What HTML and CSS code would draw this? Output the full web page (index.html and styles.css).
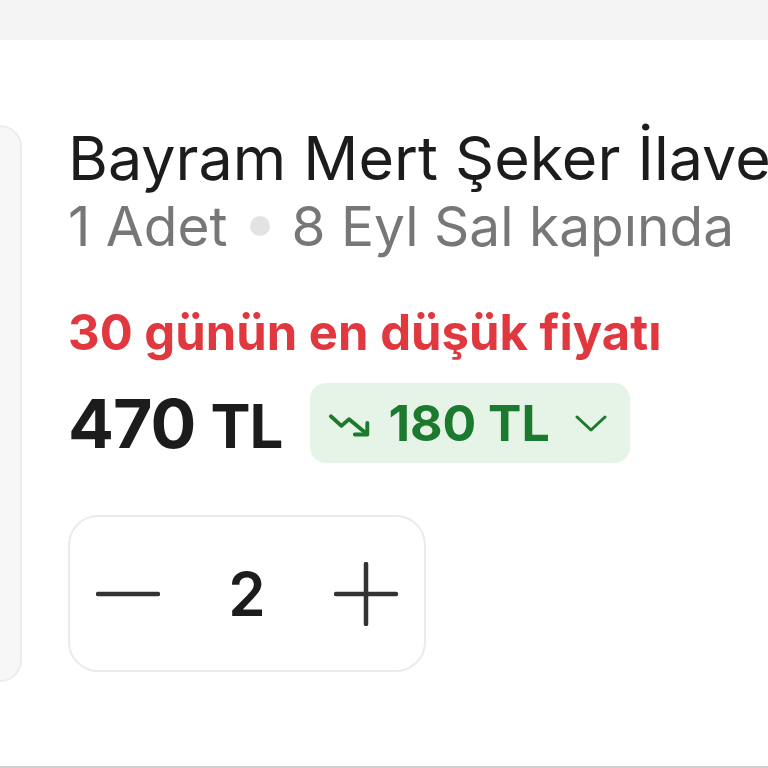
FILE: index.html
```html
<!DOCTYPE html>
<html>
<head>
    <title>Sepet</title>
    <link rel="stylesheet" href="styles.css">
</head>
<body>
    <div class="topbar"></div>

    <div class="item">
        <div class="thumb"></div>

        <div class="details">
            <div class="title">Bayram Mert Şeker İlave</div>
            <div class="meta">
                <span>1 Adet</span>
                <span class="dot"></span>
                <span>8 Eyl Sal kapında</span>
            </div>

            <div class="deal">30 günün en düşük fiyatı</div>

            <div class="price-row">
                <div class="price">470 <span class="currency">TL</span></div>
                <div class="saving">
                    <svg class="trend" viewBox="0 0 48 30" width="46" height="30">
                        <polyline points="3,8 14,18 22,11 40,26" fill="none" stroke="#1b7a2e" stroke-width="4" stroke-linejoin="round" stroke-linecap="round"/>
                        <polyline points="28,27 41,27 41,15" fill="none" stroke="#1b7a2e" stroke-width="4" stroke-linejoin="round" stroke-linecap="round"/>
                    </svg>
                    <span>180 TL</span>
                    <svg class="chevron" viewBox="0 0 34 20" width="34" height="20">
                        <polyline points="3,4 17,17 31,4" fill="none" stroke="#1b7a2e" stroke-width="3" stroke-linejoin="round" stroke-linecap="round"/>
                    </svg>
                </div>
            </div>

            <div class="stepper">
                <button class="step">
                    <svg viewBox="0 0 64 64" width="64" height="64">
                        <line x1="2" y1="32" x2="62" y2="32" stroke="#333" stroke-width="4.5" stroke-linecap="round"/>
                    </svg>
                </button>
                <span class="qty">2</span>
                <button class="step">
                    <svg viewBox="0 0 64 64" width="64" height="64">
                        <line x1="2" y1="32" x2="62" y2="32" stroke="#333" stroke-width="4.5" stroke-linecap="round"/>
                        <line x1="32" y1="2" x2="32" y2="62" stroke="#333" stroke-width="4.5" stroke-linecap="round"/>
                    </svg>
                </button>
            </div>
        </div>
    </div>

    <div class="bottomline"></div>
</body>
</html>
```

FILE: styles.css
```css
body {
    margin: 0;
    background: #fff;
    font-family: Inter, "Noto Sans", sans-serif;
    height: 768px;
    overflow: hidden;
    position: relative;
}
.topbar {
    height: 40px;
    background: #f4f4f4;
}
.item {
    display: flex;
    gap: 46px;
    margin-top: 85px;
}
.thumb {
    flex: none;
    width: 20px;
    height: 553px;
    background: #f7f7f7;
    border: 2px solid #ececec;
    border-left: none;
    border-radius: 0 28px 28px 0;
}
.details {
    flex: 1;
    min-width: 0;
    display: flex;
    flex-direction: column;
}
.title {
    font-size: 61px;
    line-height: 66px;
    color: #1c1c1c;
    white-space: nowrap;
}
.meta {
    display: flex;
    align-items: center;
    gap: 22px;
    font-size: 55px;
    line-height: 70px;
    color: #777;
}
.dot {
    width: 20px;
    height: 20px;
    border-radius: 50%;
    background: #e3e3e3;
}
.deal {
    margin-top: 43px;
    font-size: 49px;
    line-height: 58px;
    font-weight: 700;
    color: #e0383e;
}
.price-row {
    display: flex;
    align-items: center;
    gap: 28px;
    margin-top: 20px;
}
.price {
    font-size: 68px;
    font-weight: 700;
    color: #1c1c1c;
    letter-spacing: -1px;
}
.currency {
    font-size: 60px;
}
.saving {
    display: flex;
    align-items: center;
    gap: 14px;
    height: 80px;
    padding: 0 22px 0 18px;
    background: #e5f4e6;
    border-radius: 16px;
    font-size: 50px;
    font-weight: 700;
    color: #1b7a2e;
}
.chevron {
    margin-left: 10px;
}
.stepper {
    display: flex;
    align-items: center;
    justify-content: space-between;
    width: 358px;
    height: 157px;
    margin-top: 51px;
    padding: 0 26px;
    box-sizing: border-box;
    border: 2px solid #ebebeb;
    border-radius: 30px;
}
.step {
    background: none;
    border: none;
    padding: 0;
    display: flex;
}
.qty {
    font-size: 60px;
    font-weight: 600;
    color: #1c1c1c;
}
.bottomline {
    position: absolute;
    left: 0;
    right: 0;
    bottom: 0;
    height: 2px;
    background: #cfcfcf;
}
```
